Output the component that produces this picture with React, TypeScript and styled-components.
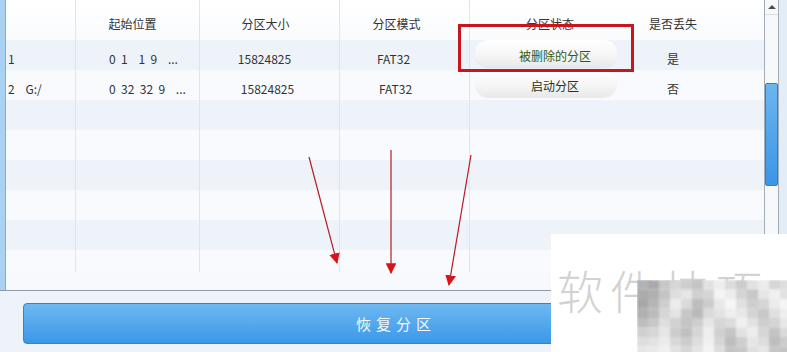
import React from 'react';
import styled, { createGlobalStyle } from 'styled-components';

const GlobalStyle = createGlobalStyle`
    body {
        margin: 0;
        background: #eef3f9;
        font-family: "Noto Sans CJK SC", "Noto Sans", "Liberation Sans", sans-serif;
    }
`;

const cols = '70px 124px 140px 130px 160px 86px 1fr';

const Window = styled.div`
    position: relative;
    width: 787px;
    height: 352px;
    overflow: hidden;
    background: #eef3f9;
`;

const TablePanel = styled.div`
    display: flex;
    height: 290px;
    border-bottom: 1px solid #8e9aa6;
    background: #f7f9fc;
`;

const LeftEdge = styled.div`
    width: 5px;
    background: #a9d1f1;
    border-right: 1px solid #9aa6b2;
`;

const GridArea = styled.div`
    flex: 1;
    display: flex;
    flex-direction: column;
`;

const Rows = styled.div`
    height: 272px;
    overflow: hidden;
`;

const HeaderRow = styled.div`
    display: grid;
    grid-template-columns: ${cols};
    height: 40px;
    background: linear-gradient(#ffffff, #f9fbfd);
`;

const Row = styled.div<{ $striped: boolean }>`
    display: grid;
    grid-template-columns: ${cols};
    height: 30px;
    background: ${p => (p.$striped ? '#eef3fa' : '#f8fafd')};
`;

const Cell = styled.div<{ $line?: boolean; $align?: string; $pad?: string }>`
    display: flex;
    align-items: center;
    justify-content: ${p => p.$align || 'center'};
    padding: ${p => p.$pad || '0'};
    box-sizing: border-box;
    border-right: ${p => (p.$line ? '1px solid #dde5ef' : 'none')};
    font-size: 12px;
    color: #333;
    white-space: pre;
    overflow: visible;
`;

const HeadCell = styled(Cell)`
    padding-top: 7px;
`;

const Pill = styled.div<{ $tone: string }>`
    margin-left: 5px;
    margin-top: -3px;
    width: 142px;
    height: 27px;
    flex-shrink: 0;
    box-sizing: border-box;
    padding: 3px 0 0 18px;
    border-radius: 13px;
    background: linear-gradient(#ffffff 0%, #f6f6f6 55%, #e9e9e9 100%);
    box-shadow: 0 1px 1px rgba(0, 0, 0, 0.06);
    display: flex;
    align-items: center;
    justify-content: center;
    font-size: 12px;
    color: ${p => p.$tone};
`;

const Scrollbar = styled.div`
    width: 13px;
    height: 272px;
    border-left: 1px solid #a3adb8;
    border-right: 1px solid #a3adb8;
    background: #f6f8fa;
    display: flex;
    flex-direction: column;
`;

const ScrollArrow = styled.div`
    height: 14px;
    border-bottom: 1px solid #d6dce2;
    display: flex;
    align-items: center;
    justify-content: center;
    &::after {
        content: '';
        border-left: 4px solid transparent;
        border-right: 4px solid transparent;
        border-bottom: 4px solid #4a4f55;
    }
`;

const ScrollThumb = styled.div`
    margin-top: 68px;
    height: 101px;
    border: 1px solid #3b7cc2;
    border-radius: 2px;
    background: linear-gradient(#6cb6f0, #3a95e6);
`;

const RightEdge = styled.div`
    width: 8px;
    background: #e2edf8;
`;

const Footer = styled.div`
    padding: 12px 0 0 23px;
`;

const RestoreButton = styled.button`
    width: 744px;
    height: 41px;
    border: 1px solid #3d80c4;
    border-radius: 4px;
    background: linear-gradient(#6fb8f1, #3a98e8);
    color: #f4f9ff;
    font-family: inherit;
    font-size: 15px;
    letter-spacing: 5px;
    padding-left: 8px;
`;

const Highlight = styled.div`
    position: absolute;
    left: 458px;
    top: 24px;
    width: 176px;
    height: 48px;
    box-sizing: border-box;
    border: 3px solid #c8161e;
`;

const Overlay = styled.svg`
    position: absolute;
    left: 0;
    top: 0;
    pointer-events: none;
`;

const Watermark = styled.div`
    position: absolute;
    left: 551px;
    top: 234px;
    right: 0;
    bottom: 0;
    background: #ffffff;
    overflow: hidden;
`;

const WatermarkText = styled.div`
    position: absolute;
    left: 6px;
    top: 22px;
    font-size: 46px;
    font-weight: 300;
    color: #d2d2d2;
    letter-spacing: 7px;
    white-space: nowrap;
`;

const Mosaic = styled.svg`
    position: absolute;
    left: 86px;
    top: 46px;
`;

// rough grey levels of the blurred mosaic, 8 rows x 14 columns
const levels = [
    [178, 170, 200, 214, 206, 196, 226, 238, 220, 204, 226, 236, 214, 222],
    [172, 176, 196, 222, 230, 208, 214, 244, 236, 212, 200, 230, 240, 226],
    [168, 182, 206, 236, 218, 190, 204, 232, 246, 224, 206, 214, 236, 244],
    [176, 188, 214, 228, 200, 186, 218, 226, 238, 232, 212, 200, 224, 238],
    [190, 200, 222, 210, 196, 206, 230, 214, 220, 240, 226, 206, 212, 232],
    [208, 214, 230, 204, 192, 214, 238, 208, 198, 226, 236, 214, 196, 218],
    [222, 226, 236, 216, 204, 222, 240, 214, 190, 206, 230, 222, 190, 204],
    [230, 234, 240, 226, 214, 228, 244, 222, 196, 200, 224, 230, 198, 196],
];

const MosaicBlocks = () => (
    <Mosaic width={154} height={76}>
        <defs>
            <filter id="soft" x="0" y="0" width="100%" height="100%">
                <feGaussianBlur stdDeviation="1.2" edgeMode="duplicate" />
            </filter>
        </defs>
        <g filter="url(#soft)">
            {levels.map((row, r) =>
                row.map((v, c) => (
                    <rect key={r + '-' + c} x={c * 11} y={r * 9.5} width={11} height={9.5} fill={`rgb(${v},${v},${v})`} />
                ))
            )}
        </g>
    </Mosaic>
);

const data = [
    { idx: '1', drive: '', start: '0  1    1  9    ...', size: '15824825', mode: 'FAT32', status: '被删除的分区', tone: '#2d5a1c', lost: '是' },
    { idx: '2', drive: 'G:/', start: '0  32  32  9    ...', size: '15824825', mode: 'FAT32', status: '启动分区', tone: '#26331c', lost: '否' },
];

const App = () => {
    const empty = Array.from({ length: 7 });
    return (
        <Window>
            <GlobalStyle />
            <TablePanel>
                <LeftEdge />
                <GridArea>
                    <Rows>
                        <HeaderRow>
                            <HeadCell $line />
                            <HeadCell $line $pad="0 10px 0 0">起始位置</HeadCell>
                            <HeadCell $line $pad="0 8px 0 0">分区大小</HeadCell>
                            <HeadCell $line $pad="0 16px 0 0">分区模式</HeadCell>
                            <HeadCell>分区状态</HeadCell>
                            <HeadCell>是否丢失</HeadCell>
                            <HeadCell />
                        </HeaderRow>
                        {data.map((d, i) => (
                            <Row key={d.idx} $striped={i % 2 === 0}>
                                <Cell $line $align="flex-start" $pad="6px 0 0 2px">
                                    {d.idx + (d.drive ? '    ' + d.drive : '')}
                                </Cell>
                                <Cell $line $align="flex-start" $pad="6px 0 0 33px">{d.start}</Cell>
                                <Cell $line $pad={i === 0 ? '6px 10px 0 0' : '6px 4px 0 0'}>{d.size}</Cell>
                                <Cell $line $pad={i === 0 ? '6px 22px 0 0' : '6px 18px 0 0'}>{d.mode}</Cell>
                                <Cell $align="flex-start">
                                    <Pill $tone={d.tone}>{d.status}</Pill>
                                </Cell>
                                <Cell $pad="6px 0 0 0">{d.lost}</Cell>
                                <Cell />
                            </Row>
                        ))}
                        {empty.map((_, i) => (
                            <Row key={'e' + i} $striped={i % 2 === 0}>
                                <Cell $line />
                                <Cell $line />
                                <Cell $line />
                                <Cell $line />
                                <Cell />
                                <Cell />
                                <Cell />
                            </Row>
                        ))}
                    </Rows>
                </GridArea>
                <Scrollbar>
                    <ScrollArrow />
                    <ScrollThumb />
                </Scrollbar>
                <RightEdge />
            </TablePanel>
            <Footer>
                <RestoreButton>恢复分区</RestoreButton>
            </Footer>

            <Highlight />

            <Overlay width={787} height={352}>
                <defs>
                    <marker id="head" viewBox="0 0 10 10" refX="9" refY="5" markerWidth="9" markerHeight="9" orient="auto">
                        <path d="M0 0 L10 5 L0 10 z" fill="#d8141a" />
                    </marker>
                </defs>
                <line x1={309} y1={157} x2={337} y2={263} stroke="#b81a22" strokeWidth={1.2} markerEnd="url(#head)" />
                <line x1={391} y1={150} x2={391} y2={273} stroke="#b81a22" strokeWidth={1.2} markerEnd="url(#head)" />
                <line x1={471} y1={155} x2={449} y2={285} stroke="#b81a22" strokeWidth={1.2} markerEnd="url(#head)" />
            </Overlay>

            <Watermark>
                <WatermarkText>软件技巧</WatermarkText>
                <MosaicBlocks />
            </Watermark>
        </Window>
    );
};

export default App;
